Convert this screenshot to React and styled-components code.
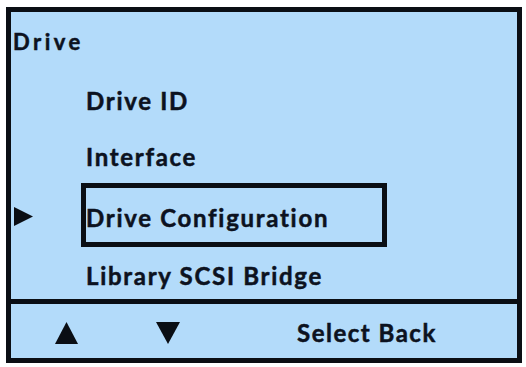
import React from "react";
import styled, {createGlobalStyle} from "styled-components";

const GlobalStyle = createGlobalStyle`
  html, body {
    margin: 0;
    padding: 0;
    background: #ffffff;
  }

  body {
    font-family: Lato, "Open Sans", sans-serif;
    font-weight: 700;
    color: #0c1220;
    -webkit-text-stroke: 0.5px #0c1220;
  }
`

const Screen = styled.div`
  box-sizing: border-box;
  width: 516px;
  height: 356px;
  margin: 7px 0 0 6px;
  border: 5px solid #0a0e14;
  background: #b3dbfa;

  display: flex;
  flex-direction: column;
`

const Main = styled.div`
  height: 287px;
`

const Title = styled.div`
  padding: 17px 0 0 2px;
  font-size: 22px;
  line-height: 26px;
  letter-spacing: 3.5px;
`

const Menu = styled.div`
  margin-top: 17px;
  display: flex;
  flex-direction: column;
`

const Row = styled.div`
  box-sizing: border-box;
  height: ${p => p.$h}px;
  padding-top: ${p => p.$selected ? 0 : 17}px;
  display: flex;
`

const Pointer = styled.div`
  width: 70px;
  padding: 24px 0 0 3px;
  box-sizing: border-box;
`

const Label = styled.div`
  box-sizing: border-box;
  width: 306px;
  font-size: 24px;
  line-height: 24px;
  letter-spacing: 1.7px;
  border: 5px solid ${p => p.$selected ? "#0a0e14" : "transparent"};
  border-top-width: ${p => p.$selected ? 5 : 0}px;
  border-bottom-width: ${p => p.$selected ? 5 : 0}px;
  height: ${p => p.$selected ? "64px" : "auto"};
  padding-top: ${p => p.$selected ? 18 : 0}px;
  white-space: nowrap;
`

const Footer = styled.div`
  flex: 1;
  border-top: 5px solid #0a0e14;
  padding-left: 44px;
  display: flex;
  align-items: flex-start;
`

const Key = styled.div`
  width: ${p => p.$w}px;
  padding-top: ${p => p.$top}px;
  font-size: 24px;
  line-height: 24px;
  letter-spacing: 1.5px;
  white-space: nowrap;
`

const Arrow = ({dir, w = 23, h = 22}) => (
  <svg width={w} height={h} viewBox={`0 0 ${w} ${h}`} style={{display: "block"}}>
    {dir === "up" && <polygon points={`${w / 2},0 ${w},${h} 0,${h}`} fill="#0a0e14"/>}
    {dir === "down" && <polygon points={`0,0 ${w},0 ${w / 2},${h}`} fill="#0a0e14"/>}
    {dir === "right" && <polygon points={`0,0 ${w},${h / 2} 0,${h}`} fill="#0a0e14"/>}
  </svg>
)

const items = [
  {label: "Drive ID", h: 56},
  {label: "Interface", h: 55},
  {label: "Drive Configuration", h: 64, selected: true},
  {label: "Library SCSI Bridge", h: 52},
]

const App = () => {
  return (
    <>
      <GlobalStyle/>
      <Screen>
        <Main>
          <Title>Drive</Title>
          <Menu>
            {items.map(item => (
              <Row key={item.label} $h={item.h} $selected={item.selected}>
                <Pointer>
                  {item.selected && <Arrow dir="right" w={19} h={19}/>}
                </Pointer>
                <Label $selected={item.selected}>{item.label}</Label>
              </Row>
            ))}
          </Menu>
        </Main>
        <Footer>
          <Key $w={101} $top={18}><Arrow dir="up" w={23} h={22}/></Key>
          <Key $w={141} $top={18}><Arrow dir="down" w={24} h={22}/></Key>
          <Key $top={17}>Select Back</Key>
        </Footer>
      </Screen>
    </>
  )
}

export default App
